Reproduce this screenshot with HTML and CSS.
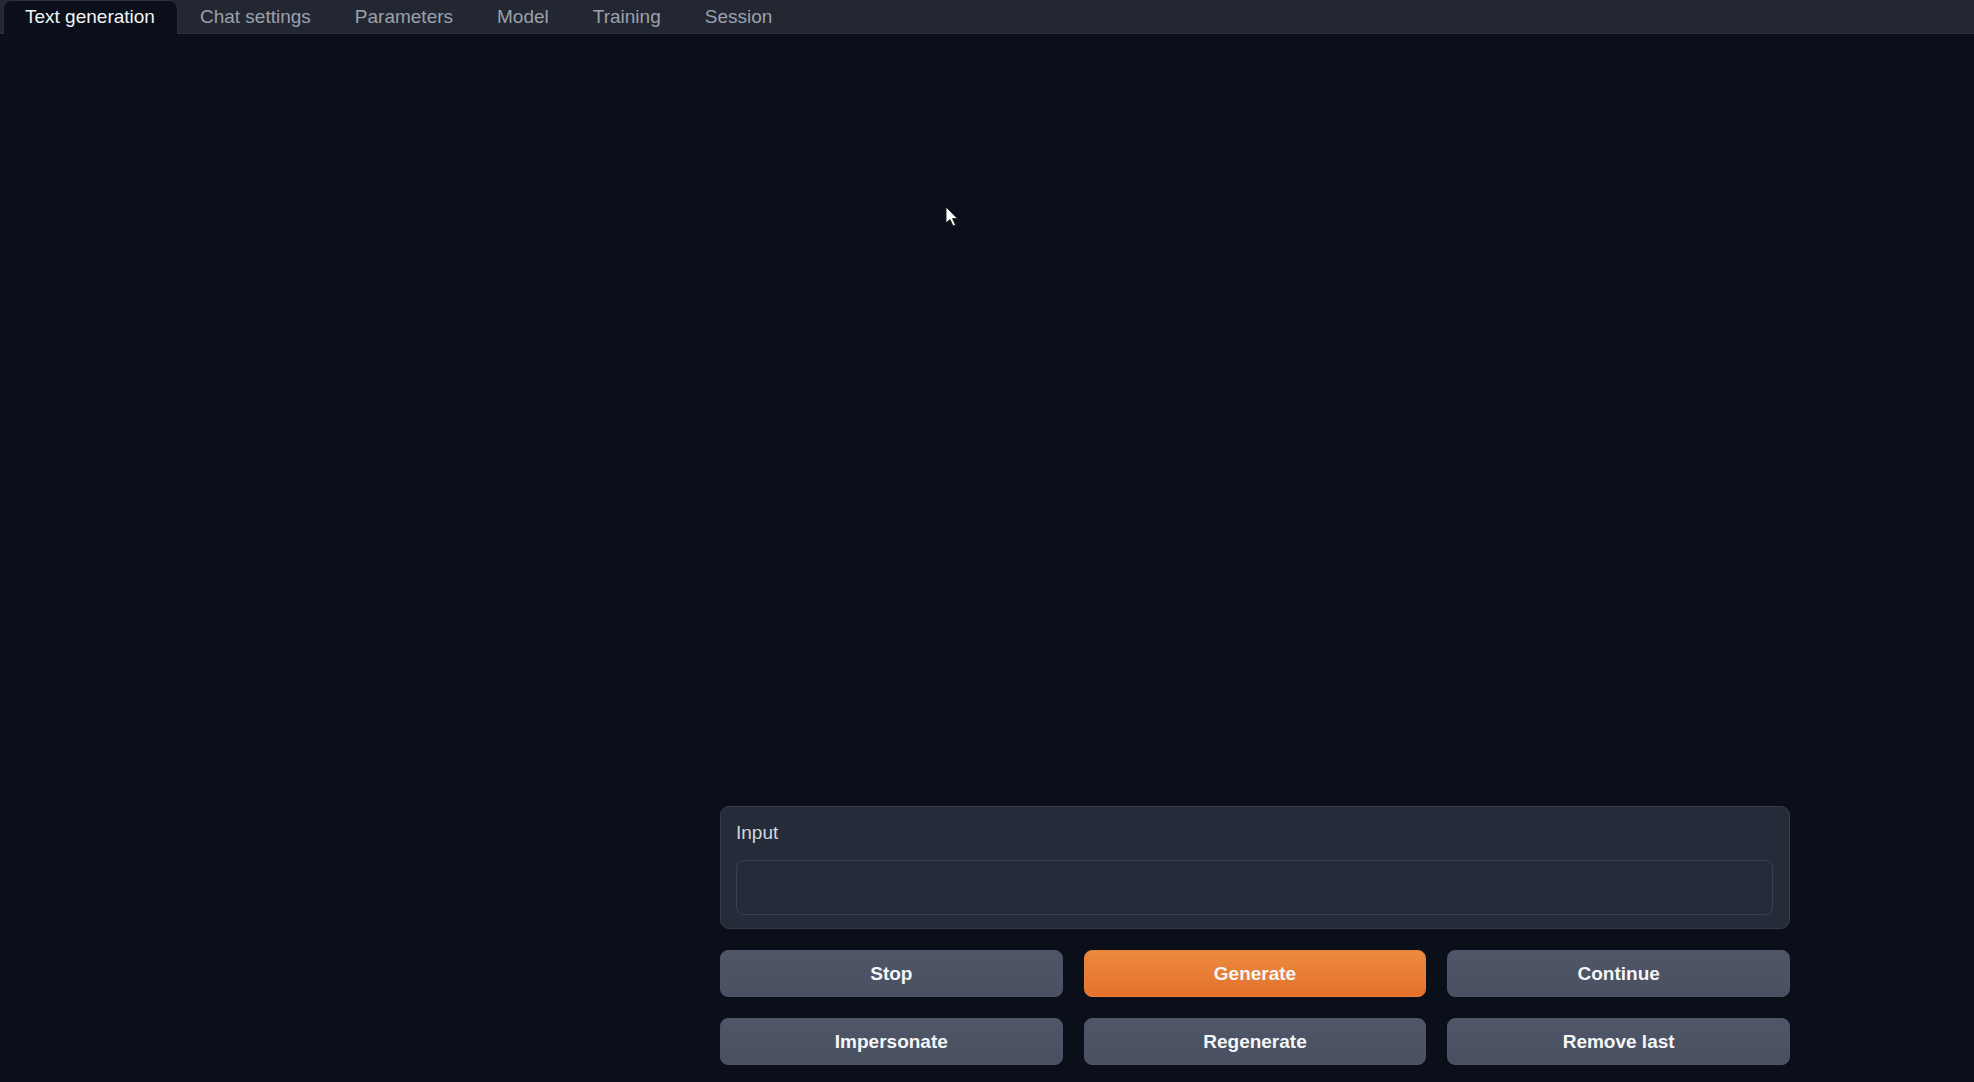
FILE: index.html
```html
<!DOCTYPE html>
<html>
<head>
<meta charset="utf-8">
<link rel="stylesheet" href="styles.css">
</head>
<body>
<nav class="tabs">
  <div class="tab active">Text generation</div>
  <div class="tab">Chat settings</div>
  <div class="tab">Parameters</div>
  <div class="tab">Model</div>
  <div class="tab">Training</div>
  <div class="tab">Session</div>
</nav>
<main class="main">
  <div class="panel">
    <div class="block">
      <label class="label">Input</label>
      <div class="textarea"></div>
    </div>
    <div class="row">
      <button class="btn">Stop</button>
      <button class="btn primary">Generate</button>
      <button class="btn">Continue</button>
    </div>
    <div class="row">
      <button class="btn">Impersonate</button>
      <button class="btn">Regenerate</button>
      <button class="btn">Remove last</button>
    </div>
  </div>
</main>
<svg class="cursor" width="14" height="22" viewBox="0 0 14 22"><path d="M1 1 L1 17 L5 13.5 L8 20 L10.5 19 L7.6 12.6 L12.5 12.6 Z" fill="#fff" stroke="#222" stroke-width="1"/></svg>
</body>
</html>
```
FILE: styles.css
```css
* { box-sizing: border-box; }
html, body {
  margin: 0;
  padding: 0;
  width: 1974px;
  height: 1082px;
  overflow: hidden;
  background: #0b0f19;
  font-family: "Liberation Sans", Arial, sans-serif;
}
.tabs {
  display: flex;
  align-items: flex-end;
  height: 34px;
  background: #232732;
  border-bottom: 1px solid #2c303b;
  padding-left: 3px;
}
.tab {
  height: 33px;
  padding: 0 22px;
  font-size: 19px;
  line-height: 33px;
  color: #9ba1ac;
}
.tab.active {
  background: #0b0f19;
  color: #f2f3f5;
  border: 1px solid #2c303b;
  border-bottom: none;
  border-radius: 8px 8px 0 0;
  height: 34px;
  margin-bottom: -1px;
  padding-left: 21px;
  line-height: 32px;
}
.main {
  height: 1048px;
  display: flex;
  flex-direction: column;
  justify-content: flex-end;
  padding: 0 0 17px 720px;
}
.panel {
  width: 1070px;
  display: flex;
  flex-direction: column;
  gap: 21px;
}
.block {
  background: #252b39;
  border: 1px solid #353b4a;
  border-radius: 9px;
  padding: 14px 16px 14px 15px;
  height: 123px;
}
.label {
  display: block;
  color: #d3d6dc;
  font-size: 19px;
  line-height: 24px;
  margin-bottom: 15px;
}
.textarea {
  height: 55px;
  border: 1px solid #3a4050;
  border-radius: 8px;
  background: #242a38;
}
.row {
  display: grid;
  grid-template-columns: repeat(3, 1fr);
  gap: 21px;
}
.btn {
  height: 47px;
  padding-top: 2px;
  border: 1px solid #4d5465;
  border-radius: 8px;
  background: linear-gradient(180deg, #4e5667, #485061);
  color: #f5f6f8;
  font-family: "Liberation Sans", Arial, sans-serif;
  font-weight: bold;
  font-size: 19px;
}
.btn.primary {
  background: linear-gradient(180deg, #ec8a3e, #e3722c);
  border-color: #e98038;
}
.cursor {
  position: absolute;
  left: 945px;
  top: 206px;
}
```
